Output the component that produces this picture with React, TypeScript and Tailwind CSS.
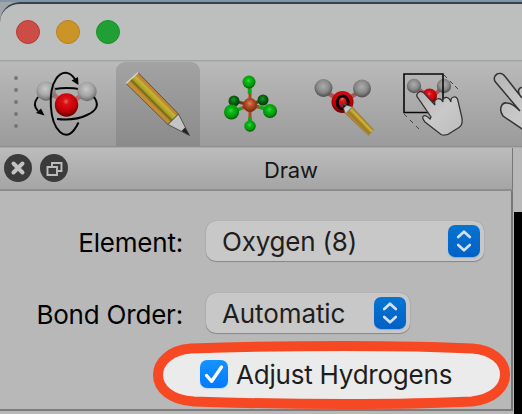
import React from "react";

type SlotProps = { box: string; active?: boolean; label: string; children: React.ReactNode };

function Slot({ box, active, label, children }: SlotProps) {
  return (
    <button
      aria-label={label}
      className={
        active
          ? "h-[84px] w-[84px] shrink-0 rounded-t-[9px] bg-linear-to-b from-[#a3a3a3] to-[#8b8b8b]"
          : "h-[84px] w-[84px] shrink-0"
      }
    >
      <svg viewBox={box} className="block h-[84px] w-[84px]" fill="none">
        {children}
      </svg>
    </button>
  );
}

function Gradients() {
  return (
    <svg className="absolute h-0 w-0">
      <defs>
        <radialGradient id="silver" cx=".46" cy=".38" r=".64">
          <stop offset="0" stopColor="#c8c8c8" />
          <stop offset=".55" stopColor="#a5a5a5" />
          <stop offset=".85" stopColor="#7c7c7c" />
          <stop offset="1" stopColor="#5c5c5c" />
        </radialGradient>
        <radialGradient id="gray" cx=".48" cy=".4" r=".62">
          <stop offset="0" stopColor="#acacac" />
          <stop offset=".55" stopColor="#898989" />
          <stop offset="1" stopColor="#484848" />
        </radialGradient>
        <radialGradient id="red" cx=".48" cy=".35" r=".65">
          <stop offset="0" stopColor="#e56a6a" />
          <stop offset=".2" stopColor="#dc1216" />
          <stop offset=".65" stopColor="#c30008" />
          <stop offset="1" stopColor="#610000" />
        </radialGradient>
        <radialGradient id="green" cx=".46" cy=".4" r=".6">
          <stop offset="0" stopColor="#3ed944" />
          <stop offset=".3" stopColor="#08b913" />
          <stop offset=".7" stopColor="#05990c" />
          <stop offset="1" stopColor="#034e07" />
        </radialGradient>
        <radialGradient id="deep" cx=".46" cy=".4" r=".6">
          <stop offset="0" stopColor="#1d9427" />
          <stop offset=".5" stopColor="#07630f" />
          <stop offset="1" stopColor="#033607" />
        </radialGradient>
        <radialGradient id="iron" cx=".48" cy=".38" r=".62">
          <stop offset="0" stopColor="#dd8664" />
          <stop offset=".35" stopColor="#bd5127" />
          <stop offset="1" stopColor="#6c2a10" />
        </radialGradient>
        <linearGradient id="hand" x1="0" y1="0" x2="1" y2="1">
          <stop offset="0" stopColor="#b5b5b5" />
          <stop offset=".5" stopColor="#c9c9c9" />
          <stop offset="1" stopColor="#bcbcbc" />
        </linearGradient>
        <linearGradient id="wood" gradientUnits="userSpaceOnUse" x1="126.500" y1="84" x2="137.500" y2="73">
          <stop offset="0" stopColor="#c9903c" />
          <stop offset=".25" stopColor="#bd8c34" />
          <stop offset=".4" stopColor="#74651a" />
          <stop offset=".52" stopColor="#aca022" />
          <stop offset=".76" stopColor="#c4b635" />
          <stop offset=".84" stopColor="#c18c38" />
          <stop offset="1" stopColor="#b98236" />
        </linearGradient>
      </defs>
    </svg>
  );
}

function Toolbar() {
  return (
    <div className="flex h-[84px] shrink-0 overflow-hidden bg-linear-to-b from-[#bababa] to-[#9b9b9b]">
      <svg viewBox="0 62 24 84" className="block h-[84px] w-6 shrink-0" fill="#777">
        {[78, 90, 102, 114, 126].map((y) => <circle key={y} cx="16" cy={y} r="2" />)}
      </svg>
      <div className="flex gap-2">
        <Slot box="24 62 84 84" label="Navigate">
          <path d="M55 89Q68 87 81 89.5" stroke="#050505" strokeWidth="2" />
          <path d="M53 94L61 101M84 94L73 101" stroke="#b86a6a" strokeWidth="4.500" />
          <circle cx="46" cy="91" r="9.700" fill="url(#silver)" />
          <circle cx="66.500" cy="105" r="11.700" fill="url(#red)" />
          <circle cx="87" cy="91.500" r="9.700" fill="url(#silver)" />
          <path d="M38 97C34 102 34 107 38 111" stroke="#050505" strokeWidth="1.800" />
          <path d="M36 113L44.500 115.500L41 108.500Z" fill="#050505" />
          <path d="M94 97C99 104 98 110 87 115Q75 121 57 119" stroke="#050505" strokeWidth="2" />
          <path d="M78.500 122.500C73 134 67 138 60 132C49 122 48 91 56 79C62 70 70 71 75.500 80" stroke="#050505" strokeWidth="2" />
          <path d="M71.500 80.500L78 77L78.500 85Z" fill="#050505" />
        </Slot>
        <Slot box="116 62 84 84" active label="Draw">
          <path d="M126 83.500L138 72.500L178.500 114L168 124.500Z" fill="url(#wood)" stroke="#3c3b37" strokeWidth=".7" />
          <path d="M126 83.500L138 72.500" stroke="#e0dcd4" strokeWidth="1.200" />
          <path d="M168 124.500L178.500 114L189.500 135.500Z" fill="#c4c4c4" stroke="#3b3b3b" strokeWidth=".8" />
          <path d="M181.500 131L185 127.500L189.500 135.500Z" fill="#222" />
        </Slot>
        <Slot box="208 62 84 84" label="Templates">
          <path d="M234 101L250 105L263 100" stroke="#743817" strokeWidth="3" />
          <circle cx="234" cy="101" r="5.500" fill="url(#deep)" />
          <circle cx="263" cy="100" r="5.500" fill="url(#deep)" />
          <path d="M250 105V84M250 105V124" stroke="#a84920" strokeWidth="3" />
          <path d="M249.500 94V84M250 117V124M242 108L233 112M259 107L269 110" stroke="#0bab13" strokeWidth="3.500" />
          <path d="M242 108L250 105L259 107" stroke="#a84920" strokeWidth="3.500" />
          <circle cx="250" cy="105" r="7" fill="url(#iron)" />
          <circle cx="249" cy="82" r="6.500" fill="url(#green)" />
          <circle cx="250" cy="126" r="5.700" fill="url(#green)" />
          <circle cx="231.500" cy="112" r="7.500" fill="url(#green)" />
          <circle cx="270" cy="111" r="7" fill="url(#green)" />
        </Slot>
        <Slot box="300 62 84 84" label="Label">
          <path d="M328 93L334 97M357 93L351 97" stroke="#a95555" strokeWidth="4.500" />
          <circle cx="323.500" cy="88" r="9" fill="url(#gray)" />
          <circle cx="362" cy="88.500" r="9" fill="url(#gray)" />
          <circle cx="342.500" cy="102" r="11" fill="url(#red)" />
          <ellipse cx="342.700" cy="102.500" rx="5.500" ry="6.500" stroke="#080000" strokeWidth="3" />
          <path d="M342 104L352.500 107L345.500 114Z" fill="#c4c4c4" stroke="#555" strokeWidth=".6" />
          <path d="M352.500 107L373.500 129.500L368.500 135.500L345.500 114Z" fill="#b38436" stroke="#8a7650" strokeWidth=".5" />
          <path d="M351 109.500L372 131.500" stroke="#c3b52f" strokeWidth="2.200" />
          <path d="M348.500 112L369.500 133.500" stroke="#8f7e20" strokeWidth="1.200" />
          <path d="M342 104L346.500 105.500L343.500 108.500Z" fill="#222" />
        </Slot>
        <Slot box="392 62 84 84" label="Select">
          <path d="M420 90L425 94M441 89L435 94" stroke="#ac5656" strokeWidth="4" />
          <circle cx="414" cy="86" r="7.200" fill="url(#gray)" />
          <circle cx="444" cy="86" r="7.200" fill="url(#gray)" />
          <circle cx="429.500" cy="96" r="7.500" fill="url(#red)" />
          <path d="M404 74H443V112.500H404Z" stroke="#080808" strokeWidth="1.600" />
          <path d="M444 75L447 78M450 81L453 84M455 86L458 89M404 114L407 117M410 120L413 123M416 126L419 129" stroke="#444" strokeWidth="1" />
          <path d="M441 134.500Q446 136.500 451 132.500L459 127.500Q463 125 462 118L458 101C457 94 450 97 451 102C448 95 442 97 443 102C440 96 433 99 435 105L424 93C419 89 415 95 418 98L431 117L430 119C424 113 420 116 425 122Z" fill="url(#hand)" stroke="#333" strokeWidth="1.300" />
        </Slot>
        <Slot box="484 62 84 84" label="Pan">
          <path d="M545 148L522 129L503 116C498 109 502 102 507 103Q512 103 520 111L495.500 82C491 76 500 69 505.500 77L522 98C515 90 520 85 526 89L550 110Z" fill="url(#hand)" stroke="#333" strokeWidth="1.500" />
        </Slot>
      </div>
    </div>
  );
}

function Stepper() {
  return (
    <span className="flex h-8 w-8 items-center justify-center rounded-[7px] bg-linear-to-b from-[#0875d2] to-[#0060c6] shadow-[0_1px_1px_#94adc7]">
      <svg viewBox="0 0 32 32" className="h-8 w-8" fill="none" stroke="#d5dfe9" strokeWidth="2.700" strokeLinecap="round" strokeLinejoin="round">
        <path d="M10.200 12L16 6.700L21.800 12M10.200 20L16 25.300L21.800 20" />
      </svg>
    </span>
  );
}

export default function App() {
  return (
    <div className="relative flex h-[414px] w-[522px] flex-col overflow-hidden bg-[#b8b8b8] font-['Inter','Liberation_Sans',sans-serif] text-[26px] leading-[40px] text-black">
      <Gradients />
      <header className="h-[60px] shrink-0 border-t-2 border-[#8194a7] bg-[#9fa5a8]">
        <div className="flex h-[58px] items-center gap-4 rounded-tl-[20px] border-t-2 border-[#38404c] bg-[#bdbfbe] pl-4">
          <span className="h-6 w-6 rounded-full border border-[#bd3a36] bg-[#cc4c46]" />
          <span className="h-6 w-6 rounded-full border border-[#b98120] bg-[#ca9526]" />
          <span className="h-6 w-6 rounded-full border border-[#189129] bg-[#20a034]" />
        </div>
      </header>
      <div className="h-0.5 shrink-0 border-t border-[#a2a2a2] bg-[#b0b0b0]" />
      <Toolbar />
      <div className="h-0.5 shrink-0 border-t border-[#8f8f8f] bg-[#aaa]" />
      <main className="flex h-[266px] shrink-0">
        <section className="w-[513px] shrink-0">
          <div className="flex h-[43px] items-center border-r border-b-2 border-r-[#777] border-b-[#8d8d8d] bg-linear-to-b from-[#bcbcbc] to-[#a5a5a5] pl-1">
            <svg viewBox="0 0 64 28" className="mb-px h-7 w-16 shrink-0" fill="none">
              <circle cx="14" cy="14" r="14" fill="#3b3b3b" />
              <path d="M9.500 9.500L18.500 18.500M18.500 9.500L9.500 18.500" stroke="#c2c2c2" strokeWidth="4" strokeLinecap="round" />
              <circle cx="50" cy="14" r="14" fill="#3b3b3b" />
              <path d="M48 12V9H57.500V17H54M43.500 13H53V21H43.500Z" stroke="#bdbdbd" strokeWidth="1.900" />
            </svg>
            <h1 className="ml-[196px] pt-0.5 text-[22px] font-normal tracking-[-0.2px] text-[#161616]">Draw</h1>
          </div>
          <div className="h-[220px] border-r-2 border-b-2 border-r-[#777] border-b-[#7c7c7c] pt-[30px]">
            <div className="grid grid-cols-[183px_1fr] gap-x-[23px]">
              <label className="h-10 pt-0.5 text-right tracking-[-0.2px]">Element:</label>
              <div className="flex h-10 w-[278px] items-center justify-between rounded-[10px] bg-[#c8c8c8] pr-1 pl-4 text-[#1e1e1e] shadow-[0_0_1px_#888,0_1px_1px_#888]">
                <span className="pt-0.5 tracking-[-0.2px]">Oxygen (8)</span><Stepper />
              </div>
              <label className="mt-8 h-10 pt-0.5 text-right tracking-[-0.2px]">Bond Order:</label>
              <div className="mt-8 flex h-10 w-[204px] items-center justify-between rounded-[10px] bg-[#c8c8c8] pr-1 pl-4 text-[#1e1e1e] shadow-[0_0_1px_#888,0_1px_1px_#888]">
                <span className="pt-0.5 tracking-[-0.1px]">Automatic</span><Stepper />
              </div>
            </div>
          </div>
        </section>
        <aside className="mt-16 ml-px w-2 bg-black" />
      </main>
      <svg viewBox="153 341 358 69" className="absolute top-[341px] left-[153px] h-[69px] w-[358px]">
        <path d="M191 348.500Q268 346 345 346T472 348.500C493 350 505 361 505 374.500S493 399 472 401.500Q422 404 345 404T194 401.500C170 400 158 388 158 375S170 350 191 348.500Z" fill="#ebebeb" stroke="#f64823" strokeWidth="10" />
      </svg>
      <label className="absolute top-[353px] left-[200px] flex items-center gap-2 text-[#1e1e1e]">
        <span className="flex h-7 w-7 items-center justify-center rounded-[7px] bg-linear-to-b from-[#1593ff] to-[#0479fc] shadow-[0_1px_1px_#b9d7f5]">
          <svg viewBox="0 0 28 28" className="h-7 w-7" fill="none" stroke="white" strokeWidth="3.300" strokeLinecap="round" strokeLinejoin="round">
            <path d="M6.500 15.500L11.700 21.300L21.500 7" />
          </svg>
        </span>
        <span className="pt-0.5 tracking-[-0.22px]">Adjust Hydrogens</span>
      </label>
    </div>
  );
}
